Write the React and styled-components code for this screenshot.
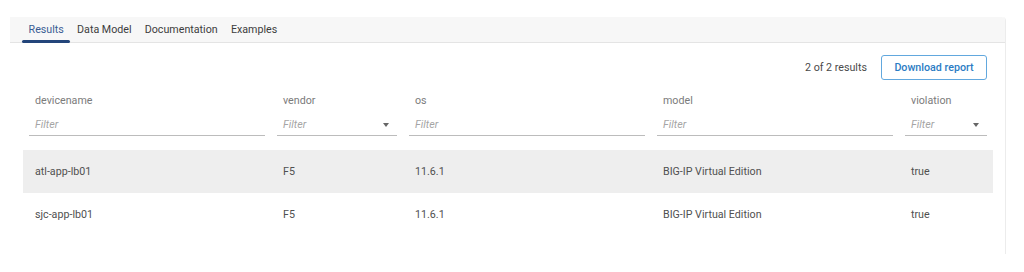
import React from "react";
import styled, { createGlobalStyle } from "styled-components";

const Global = createGlobalStyle`
  html, body { margin: 0; padding: 0; background: #fff; }
  body { font-family: Roboto, "Liberation Sans", Arial, sans-serif; -webkit-font-smoothing: antialiased; }
  * { box-sizing: border-box; }
`;

const Page = styled.div`
  width: 1024px;
  height: 272px;
  padding: 17px 18px 0 10px;
  background: #fff;
`;

const Panel = styled.div`
  border-right: 1px solid #ececec;
  border-top-right-radius: 4px;
  padding-bottom: 18px;
`;

const TabBar = styled.div`
  display: flex;
  height: 26px;
  padding-left: 12px;
  background: #f7f7f7;
  border-bottom: 1px solid #e4e4e4;
  border-top-right-radius: 4px;
`;

const Tab = styled.div`
  position: relative;
  display: flex;
  align-items: center;
  padding: 0 6.6px;
  font-size: 10.7px;
  color: ${(p) => (p.$active ? "#3a5d94" : "#3d3d3d")};
  &::after {
    content: "";
    display: ${(p) => (p.$active ? "block" : "none")};
    position: absolute;
    left: 0;
    right: 0;
    bottom: -1px;
    height: 3px;
    border-radius: 2px;
    background: #23457a;
  }
`;

const Toolbar = styled.div`
  display: flex;
  justify-content: flex-end;
  align-items: center;
  gap: 14px;
  padding: 12px 18px 0 0;
`;

const Count = styled.span`
  font-size: 10.7px;
  color: #4a4a4a;
`;

const Button = styled.button`
  height: 25px;
  width: 106px;
  padding: 0;
  border: 1px solid #62a8de;
  border-radius: 3px;
  background: #fff;
  color: #2b7cc4;
  font-family: inherit;
  font-size: 10.7px;
  font-weight: 500;
`;

const Table = styled.div`
  margin: 14px 0 0 13px;
  width: 970px;
`;

const Grid = styled.div`
  display: grid;
  grid-template-columns: 248px 132px 248px 248px 94px;
  align-items: center;
`;

const Head = styled(Grid)`
  margin-bottom: 14px;
`;

const HeadCell = styled.div`
  padding: 0 6px;
  display: flex;
  flex-direction: column;
  gap: 6px;
`;

const Label = styled.div`
  padding-left: 6px;
  font-size: 10.7px;
  line-height: 14px;
  color: #7b7b7b;
`;

const Filter = styled.div`
  display: flex;
  align-items: center;
  justify-content: space-between;
  height: 22px;
  padding: 0 8px 0 6px;
  border-bottom: 1px solid #bcbcbc;
  font-size: 10.7px;
  font-style: italic;
  color: #a5a5a5;
`;

const Caret = styled.span`
  width: 0;
  height: 0;
  border-left: 3.5px solid transparent;
  border-right: 3.5px solid transparent;
  border-top: 4px solid #666;
`;

const Row = styled(Grid)`
  height: 43px;
  background: ${(p) => (p.$shaded ? "#eeeeee" : "transparent")};
`;

const Cell = styled.div`
  padding: 0 12px;
  font-size: 10.7px;
  color: #505050;
`;

const columns = [
  { name: "devicename", select: false },
  { name: "vendor", select: true },
  { name: "os", select: false },
  { name: "model", select: false },
  { name: "violation", select: true },
];

const rows = [
  ["atl-app-lb01", "F5", "11.6.1", "BIG-IP Virtual Edition", "true"],
  ["sjc-app-lb01", "F5", "11.6.1", "BIG-IP Virtual Edition", "true"],
];

export default function App() {
  return (
    <Page>
      <Global />
      <Panel>
        <TabBar>
          <Tab $active>Results</Tab>
          <Tab>Data Model</Tab>
          <Tab>Documentation</Tab>
          <Tab>Examples</Tab>
        </TabBar>
        <Toolbar>
          <Count>2 of 2 results</Count>
          <Button>Download report</Button>
        </Toolbar>
        <Table>
          <Head>
            {columns.map((c) => (
              <HeadCell key={c.name}>
                <Label>{c.name}</Label>
                <Filter>
                  <span>Filter</span>
                  {c.select && <Caret />}
                </Filter>
              </HeadCell>
            ))}
          </Head>
          {rows.map((r, i) => (
            <Row key={i} $shaded={i === 0}>
              {r.map((v, j) => (
                <Cell key={j}>{v}</Cell>
              ))}
            </Row>
          ))}
        </Table>
      </Panel>
    </Page>
  );
}
